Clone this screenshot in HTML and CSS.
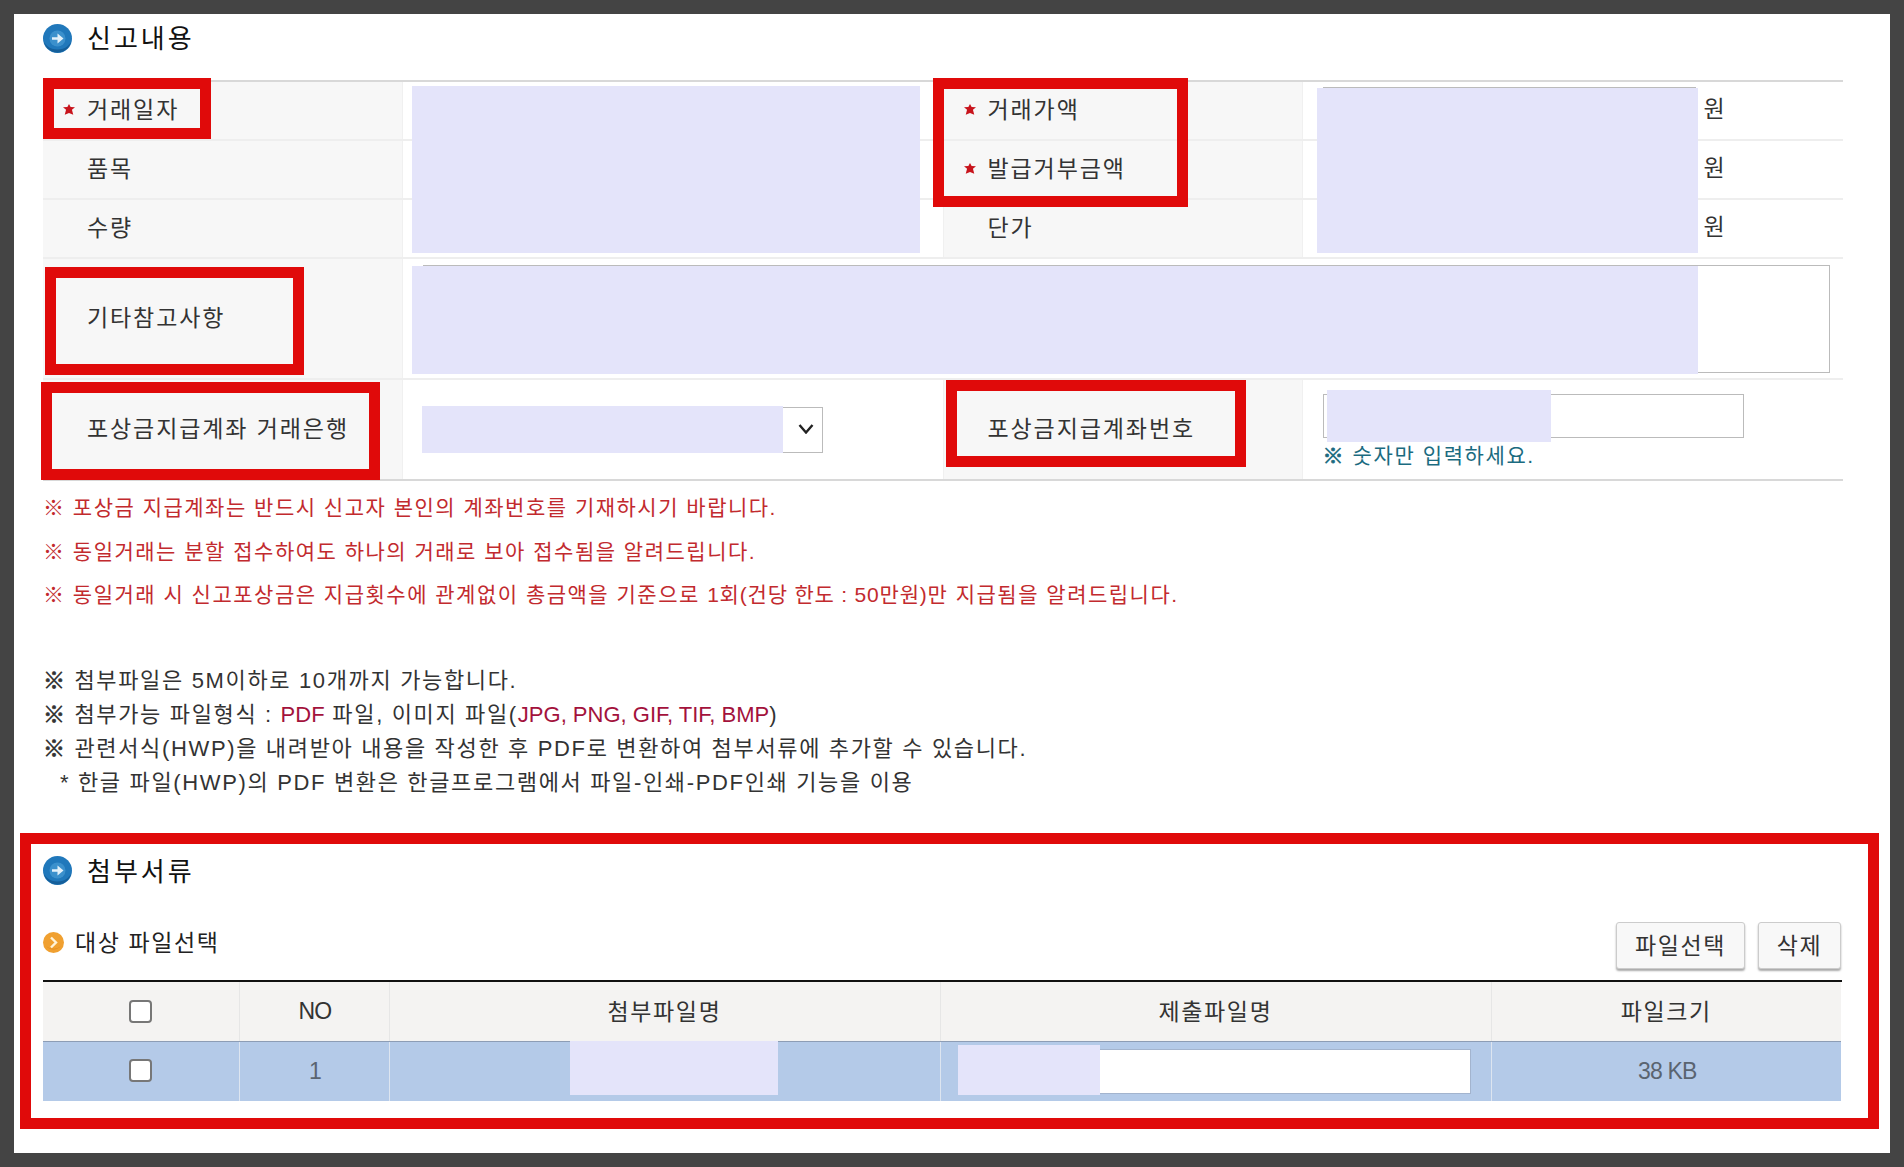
FILE: index.html
```html
<!DOCTYPE html>
<html lang="ko">
<head>
    <meta charset="UTF-8">
    <title>신고내용</title>
    <link rel="stylesheet" href="styles.css">
</head>
<body>
    <svg class="defs" width="0" height="0">
        <symbol id="req" viewBox="0 0 11 10">
            <path d="M5.5 0 L7 2.6 L11 3 L8.2 5.2 L9.4 9.8 L5.5 8.2 L1.6 9.8 L2.8 5.2 L0 3 L4 2.6 Z" fill="#c8141c"/>
        </symbol>
        <symbol id="go" viewBox="0 0 29 29">
            <circle cx="14.5" cy="14.5" r="14.5" fill="#2078bb"/>
            <path d="M0.5 14.5 A14 14 0 0 0 28.5 14.5 A14 11 0 0 1 0.5 14.5 Z" fill="#155f9a"/>
            <circle cx="14.5" cy="14.5" r="8" fill="#3b90cc"/>
            <path d="M9 13.2 H14.5 V9.5 L20.5 14.5 L14.5 19.5 V15.8 H9 Z" fill="#e2f0fa"/>
        </symbol>
        <symbol id="more" viewBox="0 0 21 21">
            <circle cx="10.5" cy="10.5" r="10.5" fill="#f0a030"/>
            <path d="M3 14 A10 10 0 0 0 18 14 A9 6 0 0 1 3 14 Z" fill="#e38a1c"/>
            <path d="M8 5.5 L13 10.5 L8 15.5" fill="none" stroke="#fff3d8" stroke-width="2.4"/>
        </symbol>
    </svg>

    <main class="panel">
        <h2 class="section-title"><svg class="icon-go"><use href="#go"/></svg><span>신고내용</span></h2>

        <table class="form-table">
            <colgroup>
                <col class="col-label-a"><col class="col-value-a"><col class="col-label-b"><col class="col-value-b">
            </colgroup>
            <tr class="row-short">
                <th><svg class="req"><use href="#req"/></svg>거래일자</th>
                <td><input class="field field-wide" type="text"></td>
                <th><svg class="req"><use href="#req"/></svg>거래가액</th>
                <td><input class="field field-money" type="text"><span class="unit">원</span></td>
            </tr>
            <tr class="row-short">
                <th>품목</th>
                <td><input class="field field-wide" type="text"></td>
                <th><svg class="req"><use href="#req"/></svg>발급거부금액</th>
                <td><input class="field field-money" type="text"><span class="unit">원</span></td>
            </tr>
            <tr class="row-short">
                <th>수량</th>
                <td><input class="field field-wide" type="text"></td>
                <th>단가</th>
                <td><input class="field field-money" type="text"><span class="unit">원</span></td>
            </tr>
            <tr class="row-memo">
                <th>기타참고사항</th>
                <td colspan="3"><textarea class="memo"></textarea></td>
            </tr>
            <tr class="row-account">
                <th>포상금지급계좌 거래은행</th>
                <td>
                    <div class="select-wrap">
                        <select class="bank"></select>
                        <svg class="chevron" viewBox="0 0 16 10"><path d="M1.5 1 L8 8.5 L14.5 1" fill="none" stroke="#222" stroke-width="2.4"/></svg>
                    </div>
                </td>
                <th>포상금지급계좌번호</th>
                <td class="cell-account">
                    <input class="field field-account" type="text">
                    <p class="hint"><b>※</b> 숫자만 입력하세요.</p>
                </td>
            </tr>
        </table>

        <div class="notes-red">
            <p>※ 포상금 지급계좌는 반드시 신고자 본인의 계좌번호를 기재하시기 바랍니다.</p>
            <p>※ 동일거래는 분할 접수하여도 하나의 거래로 보아 접수됨을 알려드립니다.</p>
            <p>※ 동일거래 시 신고포상금은 지급횟수에 관계없이 총금액을 기준으로 <span class="tight">1회(건당 한도 : 50만원)</span>만 지급됨을 알려드립니다.</p>
        </div>

        <div class="notes">
            <p><b>※</b> 첨부파일은 5M이하로 10개까지 가능합니다.</p>
            <p><b>※</b> 첨부가능 파일형식 : <em>PDF</em> 파일, 이미지 파일(<em>JPG, PNG, GIF, TIF, BMP</em>)</p>
            <p><b>※</b> 관련서식(HWP)을 내려받아 내용을 작성한 후 PDF로 변환하여 첨부서류에 추가할 수 있습니다.</p>
            <p class="sub-note">* 한글 파일(HWP)의 PDF 변환은 한글프로그램에서 파일-인쇄-PDF인쇄 기능을 이용</p>
        </div>

        <h2 class="section-title section-attach"><svg class="icon-go"><use href="#go"/></svg><span>첨부서류</span></h2>

        <div class="file-head">
            <h3 class="sub-title"><svg class="icon-more"><use href="#more"/></svg><span>대상 파일선택</span></h3>
            <div class="file-buttons">
                <button class="btn btn-pick" type="button">파일선택</button>
                <button class="btn btn-del" type="button">삭제</button>
            </div>
        </div>

        <div class="file-wrap">
            <table class="file-table">
                <colgroup>
                    <col class="col-check"><col class="col-no"><col class="col-name"><col class="col-submit"><col class="col-size">
                </colgroup>
                <thead>
                    <tr>
                        <th><input class="check" type="checkbox"></th>
                        <th class="latin">NO</th>
                        <th>첨부파일명</th>
                        <th>제출파일명</th>
                        <th>파일크기</th>
                    </tr>
                </thead>
                <tbody>
                    <tr>
                        <td><input class="check" type="checkbox"></td>
                        <td class="latin">1</td>
                        <td></td>
                        <td class="cell-submit"><input class="submit-name" type="text"></td>
                        <td class="latin">38 KB</td>
                    </tr>
                </tbody>
            </table>
        </div>

        <!-- 가림 처리 -->
        <div class="mask mask-a"></div>
        <div class="mask mask-b"></div>
        <div class="mask mask-memo"></div>
        <div class="mask mask-bank"></div>
        <div class="mask mask-account"></div>
        <div class="mask mask-file"></div>
        <div class="mask mask-submit"></div>

        <!-- 빨간 표시 -->
        <div class="mark mark-date"></div>
        <div class="mark mark-amount"></div>
        <div class="mark mark-memo"></div>
        <div class="mark mark-bank"></div>
        <div class="mark mark-account"></div>
        <div class="mark mark-attach"></div>
    </main>
</body>
</html>
```

FILE: styles.css
```css
* {
    margin: 0;
    padding: 0;
    box-sizing: border-box;
}

body {
    background-color: #444;
    padding: 14px;
    font-family: "Liberation Sans", "Noto Sans CJK KR", sans-serif;
    color: #333;
}

.defs {
    position: absolute;
}

.panel {
    position: relative;
    height: 1139px;
    background: white;
    padding: 10px 47px 0 29px;
    overflow: hidden;
}

.section-title {
    display: flex;
    align-items: center;
    height: 28px;
    margin-bottom: 28px;
    font-size: 26px;
    font-weight: 400;
    letter-spacing: 3px;
    color: #111;
}

.section-title span {
    margin-top: -3px;
}

.section-attach {
    margin-top: 57px;
    margin-bottom: 37px;
}

.icon-go {
    width: 29px;
    height: 29px;
    margin-right: 15px;
}

.form-table {
    width: 1800px;
    table-layout: fixed;
    border-collapse: collapse;
    border-top: 2px solid #d8d8d8;
    border-bottom: 2px solid #d8d8d8;
    font-size: 23px;
    letter-spacing: 1.9px;
}

.col-label-a { width: 359px; }
.col-value-a { width: 541px; }
.col-label-b { width: 359px; }
.col-value-b { width: 541px; }

.form-table th {
    background: #f7f7f7;
    padding: 0 0 5px 44px;
    text-align: left;
    font-weight: 400;
    border-right: 1px solid #f0f0f0;
}

.form-table td {
    padding-left: 20px;
    border-right: 1px solid #f0f0f0;
}

.form-table td:last-child {
    border-right: none;
}

.form-table tr + tr th,
.form-table tr + tr td {
    border-top: 2px solid #eee;
}

.row-short { height: 59px; }
.row-memo { height: 121px; }
.row-account { height: 101px; }

.req {
    width: 12px;
    height: 11px;
    margin-left: -24px;
    margin-right: 12px;
    vertical-align: 3px;
}

.field {
    height: 44px;
    border: 1px solid #bbb;
    background: white;
}

.field-wide { width: 490px; }
.field-account { width: 421px; display: block; }

.field-money {
    width: 373px;
    vertical-align: middle;
    margin-bottom: 3px;
}

.unit {
    display: inline-block;
    margin-left: 8px;
    padding-bottom: 7px;
    vertical-align: middle;
}

.memo {
    display: block;
    width: 1407px;
    height: 108px;
    border: 1px solid #bbb;
    resize: none;
}

.select-wrap {
    position: relative;
    width: 400px;
}

.bank {
    display: block;
    width: 100%;
    height: 46px;
    border: 1px solid #bbb;
    background: white;
    appearance: none;
}

.chevron {
    position: absolute;
    right: 9px;
    top: 17px;
    width: 16px;
    height: 10px;
}

.form-table .cell-account {
    vertical-align: top;
    padding-top: 14px;
}

.hint {
    margin-top: 6px;
    font-size: 21px;
    line-height: 24px;
    letter-spacing: 1.6px;
    color: #1b6b80;
}

.hint b,
.notes b {
    font-weight: 400;
    -webkit-text-stroke: 0.7px currentColor;
}

.notes-red {
    margin-top: 5px;
    font-size: 21px;
    line-height: 43.5px;
    letter-spacing: 1.5px;
    color: #c22a2e;
}

.tight {
    letter-spacing: 0.8px;
}

.notes {
    margin-top: 47px;
    font-size: 22px;
    line-height: 34px;
    letter-spacing: 1.65px;
}

.notes em {
    font-style: normal;
    letter-spacing: 0;
    color: #a3123c;
}

.sub-note {
    padding-left: 17px;
}

.file-head {
    display: flex;
    justify-content: space-between;
    align-items: center;
    height: 47px;
    margin-bottom: 11px;
}

.sub-title {
    display: flex;
    align-items: center;
    padding-bottom: 6px;
    font-size: 23px;
    font-weight: 400;
    letter-spacing: 1.6px;
    color: #222;
}

.sub-title span {
    margin-top: -3px;
}

.icon-more {
    width: 21px;
    height: 21px;
    margin-right: 11px;
}

.file-buttons {
    display: flex;
    gap: 13px;
}

.btn {
    height: 47px;
    padding-bottom: 3px;
    background: #f8f8f8;
    border: 1px solid #ccc;
    border-radius: 3px;
    box-shadow: 0 2px 2px #aaa;
    font-family: inherit;
    font-size: 23px;
    letter-spacing: 1.6px;
    color: #333;
}

.btn-pick { width: 129px; }
.btn-del { width: 83px; margin-right: 2px; }

.file-wrap {
    width: 1799px;
    border-top: 2px solid #111;
}

.file-table {
    width: 1798px;
    table-layout: fixed;
    border-collapse: collapse;
    font-size: 23px;
    letter-spacing: 1.6px;
    text-align: center;
}

.col-check { width: 196px; }
.col-no { width: 150px; }
.col-name { width: 551px; }
.col-submit { width: 551px; }
.col-size { width: 350px; }

.file-table th {
    height: 60px;
    padding-bottom: 3px;
    background: #f4f3f2;
    font-weight: 400;
    border-right: 1px solid #e6e6e6;
    border-bottom: 1px solid #8d9db5;
}

.file-table td {
    height: 59px;
    background: #b4cae8;
    border-right: 1px solid #dde5f0;
    color: #5a6470;
}

.file-table th:last-child,
.file-table td:last-child {
    border-right: none;
}

.file-table .latin {
    letter-spacing: -0.8px;
    padding-left: 2px;
}

.file-table th.latin {
    padding-bottom: 0;
}

.file-table td .check {
    margin-top: -1px;
}

.check {
    appearance: none;
    display: block;
    width: 23px;
    height: 23px;
    margin: 3px auto 0;
    background: white;
    border: 2px solid #777;
    border-radius: 4px;
}

.submit-name {
    display: block;
    width: 511px;
    height: 43px;
    margin-left: 18px;
    border: none;
    background: white;
    box-shadow: 0 0 0 1px #a3b4ce;
}

.mask {
    position: absolute;
    background: #e4e4fa;
}

.mask-a { left: 398px; top: 72px; width: 508px; height: 167px; }
.mask-b { left: 1303px; top: 74px; width: 381px; height: 165px; }
.mask-memo { left: 398px; top: 252px; width: 1286px; height: 108px; }
.mask-bank { left: 408px; top: 392px; width: 361px; height: 47px; }
.mask-account { left: 1313px; top: 376px; width: 224px; height: 52px; }
.mask-file { left: 556px; top: 1027px; width: 208px; height: 54px; }
.mask-submit { left: 944px; top: 1031px; width: 142px; height: 50px; }

.mark {
    position: absolute;
    border: 11px solid #e00a0a;
}

.mark-date { left: 29px; top: 64px; width: 168px; height: 61px; }
.mark-amount { left: 919px; top: 64px; width: 255px; height: 129px; }
.mark-memo { left: 31px; top: 253px; width: 259px; height: 108px; }
.mark-bank { left: 27px; top: 368px; width: 339px; height: 98px; }
.mark-account { left: 932px; top: 366px; width: 300px; height: 87px; }
.mark-attach { left: 6px; top: 819px; width: 1859px; height: 296px; }
```
